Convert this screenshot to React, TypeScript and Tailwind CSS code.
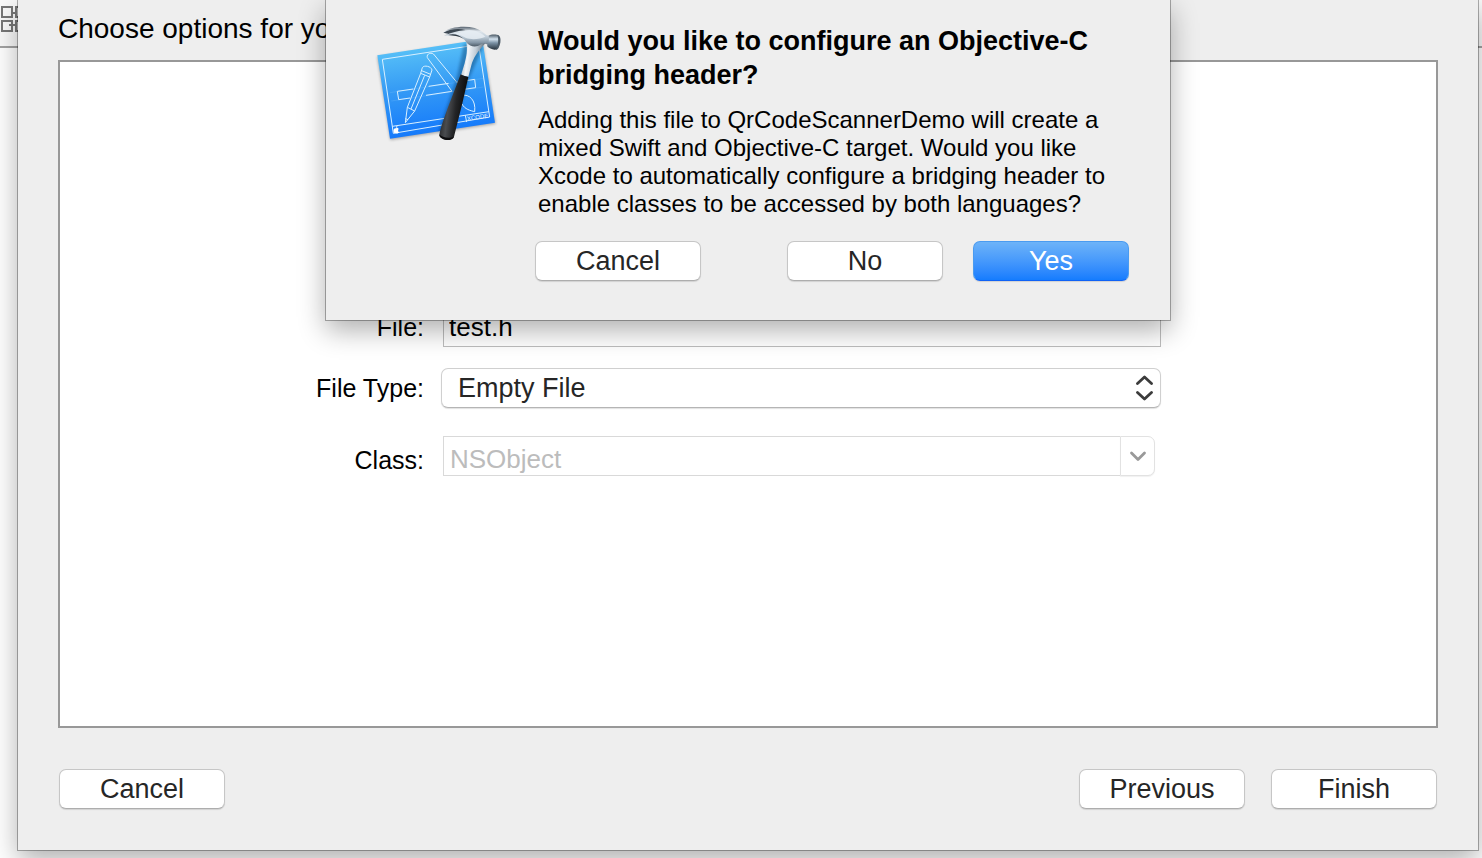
import React from "react";

const pushButton =
  "h-10 rounded-[7px] border border-[#c6c6c6] border-b-[#adadad] bg-white text-[27px] leading-[38px] text-[#262626] shadow-[0_1px_1px_rgba(0,0,0,0.12)]";

function XcodeIcon() {
  return (
    <svg viewBox="0 0 420 390" className="h-[130px] w-[140px] shrink-0" role="img" aria-label="Xcode">
      <defs>
        <linearGradient id="plate" x1="0" y1="0" x2="0.15" y2="1">
          <stop offset="0" stopColor="#62ccf8" />
          <stop offset="0.5" stopColor="#379df5" />
          <stop offset="1" stopColor="#1479fb" />
        </linearGradient>
        <linearGradient id="steel" x1="0" y1="0" x2="0" y2="1">
          <stop offset="0" stopColor="#53606c" />
          <stop offset="0.22" stopColor="#dfe6ec" />
          <stop offset="0.5" stopColor="#c2cfda" />
          <stop offset="0.8" stopColor="#8496a6" />
          <stop offset="1" stopColor="#4d5a66" />
        </linearGradient>
        <linearGradient id="neck" x1="0" y1="0" x2="1" y2="0.2">
          <stop offset="0" stopColor="#8797a5" />
          <stop offset="0.35" stopColor="#f3f6f9" />
          <stop offset="0.65" stopColor="#c3ced8" />
          <stop offset="1" stopColor="#5d6b78" />
        </linearGradient>
        <linearGradient id="face" x1="0" y1="0" x2="0" y2="1">
          <stop offset="0" stopColor="#4a5863" />
          <stop offset="0.3" stopColor="#d3e2ee" />
          <stop offset="0.55" stopColor="#7c93a6" />
          <stop offset="1" stopColor="#27333d" />
        </linearGradient>
        <linearGradient id="grip" x1="0" y1="0" x2="1" y2="0.25">
          <stop offset="0" stopColor="#0c0c0d" />
          <stop offset="0.4" stopColor="#4a4c4f" />
          <stop offset="0.65" stopColor="#242527" />
          <stop offset="1" stopColor="#080808" />
        </linearGradient>
        <filter id="soft" x="-20%" y="-20%" width="140%" height="140%">
          <feGaussianBlur stdDeviation="4" />
        </filter>
        <clipPath id="plateClip">
          <path d="M22 106 337 58 375 308 60 356Z" />
        </clipPath>
      </defs>
      <path d="M22 110 337 62 377 311 61 360Z" fill="#000" opacity="0.3" filter="url(#soft)" />
      <path d="M22 106 337 58 375 308 60 356Z" fill="url(#plate)" />
      <g fill="none" stroke="#d9f0ff" strokeWidth="3" strokeLinejoin="round">
        <path d="M37 118 326 74 359 291 70 340Z" />
        <path d="M67 319 357 275" />
        <path d="M286 286 290 306" />
        <path d="M82 214 130 207M82 214 86 239 120 234M176 199 236 190M168 226 246 214M262 186 314 178 317 203 282 208" />
        <path d="M172 113C168 100 187 95 193 105L268 196M172 113 246 214" />
        <path d="M157 143C162 134 184 139 186 150L179 171 152 160ZM152 160 112 262 134 273 179 171M164 166 123 267M155 152 182 163M112 262 106 308 134 273M106 296 114 299" />
        <path d="M276 226C298 222 318 240 314 275 302 272 284 268 276 252" />
      </g>
      <g stroke="#b9e3ff" strokeWidth="1" opacity="0.4">
        <path d="M60 218 340 175M64 243 340 201" />
      </g>
      <text x="292" y="302" fontFamily="Liberation Sans, sans-serif" fontSize="18" fill="#e6f5ff" transform="rotate(-8 292 302)">
        XCODE
      </text>
      <path d="M78 325C83 321 87 325 85 329 83 332 85 335 87 336 84 342 81 341 78 340 73 341 69 335 71 329 72 325 76 325 78 325ZM78 323C78 319 81 317 82 317 82 321 80 323 78 323Z" fill="#fff" />
      <g clipPath="url(#plateClip)">
        <path d="M282 72 262 166 202 346 236 366 300 168 340 80Z" fill="#06325f" opacity="0.4" filter="url(#soft)" />
      </g>
      <path d="M288 60C294 92 289 110 284 130L273 166 295 170 304 136C310 114 322 96 346 70L300 50Z" fill="url(#neck)" />
      <path d="M272 163C280 168 288 170 295 171L277 250 252 350C248 364 208 360 208 346 210 328 222 296 234 262Z" fill="url(#grip)" />
      <path d="M208 343C216 354 240 356 252 350C248 366 208 363 208 343Z" fill="#0d0d0e" />
      <path d="M220 38C236 22 280 16 314 24 330 29 341 38 350 46L360 47 357 77C348 71 340 68 333 73 318 84 300 80 290 68 282 54 264 46 248 46L222 47 235 42Z" fill="url(#steel)" />
      <path d="M286 32C304 26 332 36 346 50 330 58 304 60 288 54 276 46 262 42 250 41 262 38 274 36 286 32Z" fill="#e6edf3" opacity="0.85" />
      <path d="M220 38C242 26 268 25 286 30 264 32 244 38 222 47L235 41Z" fill="#3d4852" />
      <path d="M234 45C252 39 268 45 281 56 266 48 250 47 234 45Z" fill="#2d3740" />
      <path d="M356 47C362 43 380 42 387 47 392 58 389 81 381 88 370 91 358 86 351 78 357 68 358 56 356 47Z" fill="url(#face)" />
      <path d="M382 45C390 46 393 55 391 68 388 81 384 89 378 89 384 76 387 60 382 45Z" fill="#4c5b67" />
    </svg>
  );
}

function BackgroundWindow() {
  return (
    <div className="flex h-12 items-start border-b-2 border-[#a3a3a3] bg-[#fafafa]">
      <svg viewBox="0 0 36 36" className="h-9 w-9" fill="none" stroke="#777" strokeWidth="2" aria-hidden="true">
        <path d="M2 7H12V17H2ZM16 7H26V17H16ZM2 21H12V31H2ZM16 21H26V31H16ZM12 13H16M9 25H16" />
      </svg>
    </div>
  );
}

function BridgingHeaderDialog() {
  return (
    <div
      role="dialog"
      aria-labelledby="dialog-title"
      className="pointer-events-auto flex h-80 w-[844px] bg-[#eeeeee] pl-11 pr-[41px] pt-5 shadow-[0_0_0_1px_rgba(0,0,0,0.3),0_10px_26px_rgba(0,0,0,0.32)]"
    >
      <XcodeIcon />
      <div className="ml-7 flex-1">
        <h2 id="dialog-title" className="pt-1 text-[27px] font-bold leading-[34px] text-black">
          Would you like to configure an Objective-C bridging header?
        </h2>
        <p className="mt-3.5 text-2xl leading-7 text-black">
          Adding this file to QrCodeScannerDemo will create a mixed Swift and Objective-C target. Would you like Xcode
          to automatically configure a bridging header to enable classes to be accessed by both languages?
        </p>
        <div className="-ml-[3px] mt-[23px] flex">
          <button type="button" className={`${pushButton} w-[166px]`}>
            Cancel
          </button>
          <button type="button" className={`${pushButton} ml-auto w-[156px]`}>
            No
          </button>
          <button
            type="button"
            className="ml-[30px] h-10 w-[156px] rounded-[7px] border border-[#4a9bf0] border-b-[#0f62f5] bg-linear-to-b from-[#6db3f8] to-[#147cfe] text-[27px] leading-[38px] text-white shadow-[0_1px_1px_rgba(0,0,0,0.12)]"
          >
            Yes
          </button>
        </div>
      </div>
    </div>
  );
}

export default function App() {
  return (
    <div className="relative min-h-screen overflow-hidden bg-white font-['Liberation_Sans',Arial,sans-serif]">
      <div className="absolute inset-x-0 top-0">
        <BackgroundWindow />
      </div>

      <main className="relative ml-[18px] mr-1 flex min-h-[calc(100vh-8px)] flex-col bg-[#eeeeee] px-10 pb-[41px] pt-[11px] shadow-[0_0_0_1px_rgba(0,0,0,0.3),0_10px_26px_rgba(0,0,0,0.32)]">
        <h1 className="text-[28px] leading-9 text-black">Choose options for your new file:</h1>

        <form className="mt-[13px] flex flex-1 flex-col border-2 border-[#989898] bg-white pr-[275px] pt-[245px]">
          <div className="grid grid-cols-[364px_1fr] items-center gap-x-[17px] text-[26px] text-black">
            <label htmlFor="file" className="text-right text-[25px] leading-10">
              File:
            </label>
            <input
              id="file"
              type="text"
              defaultValue="test.h"
              className="ml-0.5 h-[39px] min-w-0 border border-[#bdbdbd] bg-white px-[5px] outline-none"
            />

            <label htmlFor="file-type" className="mt-[21px] text-right text-[25px] leading-10">
              File Type:
            </label>
            <div className="relative mt-[21px] flex">
              <select
                id="file-type"
                className="h-10 w-full appearance-none rounded-[7px] border border-[#d0d0d0] border-b-[#b5b5b5] bg-white pl-4 text-[27px] leading-[38px] text-[#262626] shadow-[0_1px_1px_rgba(0,0,0,0.12)] outline-none"
              >
                <option>Empty File</option>
              </select>
              <svg
                viewBox="0 0 18 28"
                className="pointer-events-none absolute right-2 top-1.5 h-7 w-[18px]"
                fill="none"
                stroke="#3c3c3c"
                strokeWidth="2.8"
                strokeLinecap="round"
                strokeLinejoin="round"
                aria-hidden="true"
              >
                <path d="M2.5 9.5 9.5 3 16.5 9.5M2.5 18.5 9.5 25 16.5 18.5" />
              </svg>
            </div>

            <label htmlFor="class" className="mt-7 pt-1 text-right text-[25px] leading-10">
              Class:
            </label>
            <div className="mb-1 ml-0.5 mr-1.5 mt-7 flex">
              <input
                id="class"
                type="text"
                defaultValue="NSObject"
                disabled
                className="h-10 min-w-0 flex-1 border border-r-0 border-[#d9d9d9] bg-white px-1.5 pt-1.5 text-[#bcbcbc]"
              />
              <button
                type="button"
                disabled
                aria-label="Show classes"
                className="flex h-10 w-[35px] items-center justify-center rounded-r-[7px] border border-[#e2e2e2] bg-white shadow-[0_1px_1px_rgba(0,0,0,0.06)]"
              >
                <svg
                  viewBox="0 0 18 12"
                  className="h-3 w-[18px]"
                  fill="none"
                  stroke="#999"
                  strokeWidth="2.8"
                  strokeLinecap="round"
                  strokeLinejoin="round"
                  aria-hidden="true"
                >
                  <path d="M2.5 3 9 9.5 15.5 3" />
                </svg>
              </button>
            </div>
          </div>
        </form>

        <div className="mt-[41px] flex px-px">
          <button type="button" className={`${pushButton} w-[166px]`}>
            Cancel
          </button>
          <button type="button" className={`${pushButton} ml-auto w-[166px]`}>
            Previous
          </button>
          <button type="button" className={`${pushButton} ml-[26px] w-[166px]`}>
            Finish
          </button>
        </div>

        <div className="pointer-events-none absolute inset-x-0 top-0 flex justify-center">
          <BridgingHeaderDialog />
        </div>
      </main>
    </div>
  );
}
